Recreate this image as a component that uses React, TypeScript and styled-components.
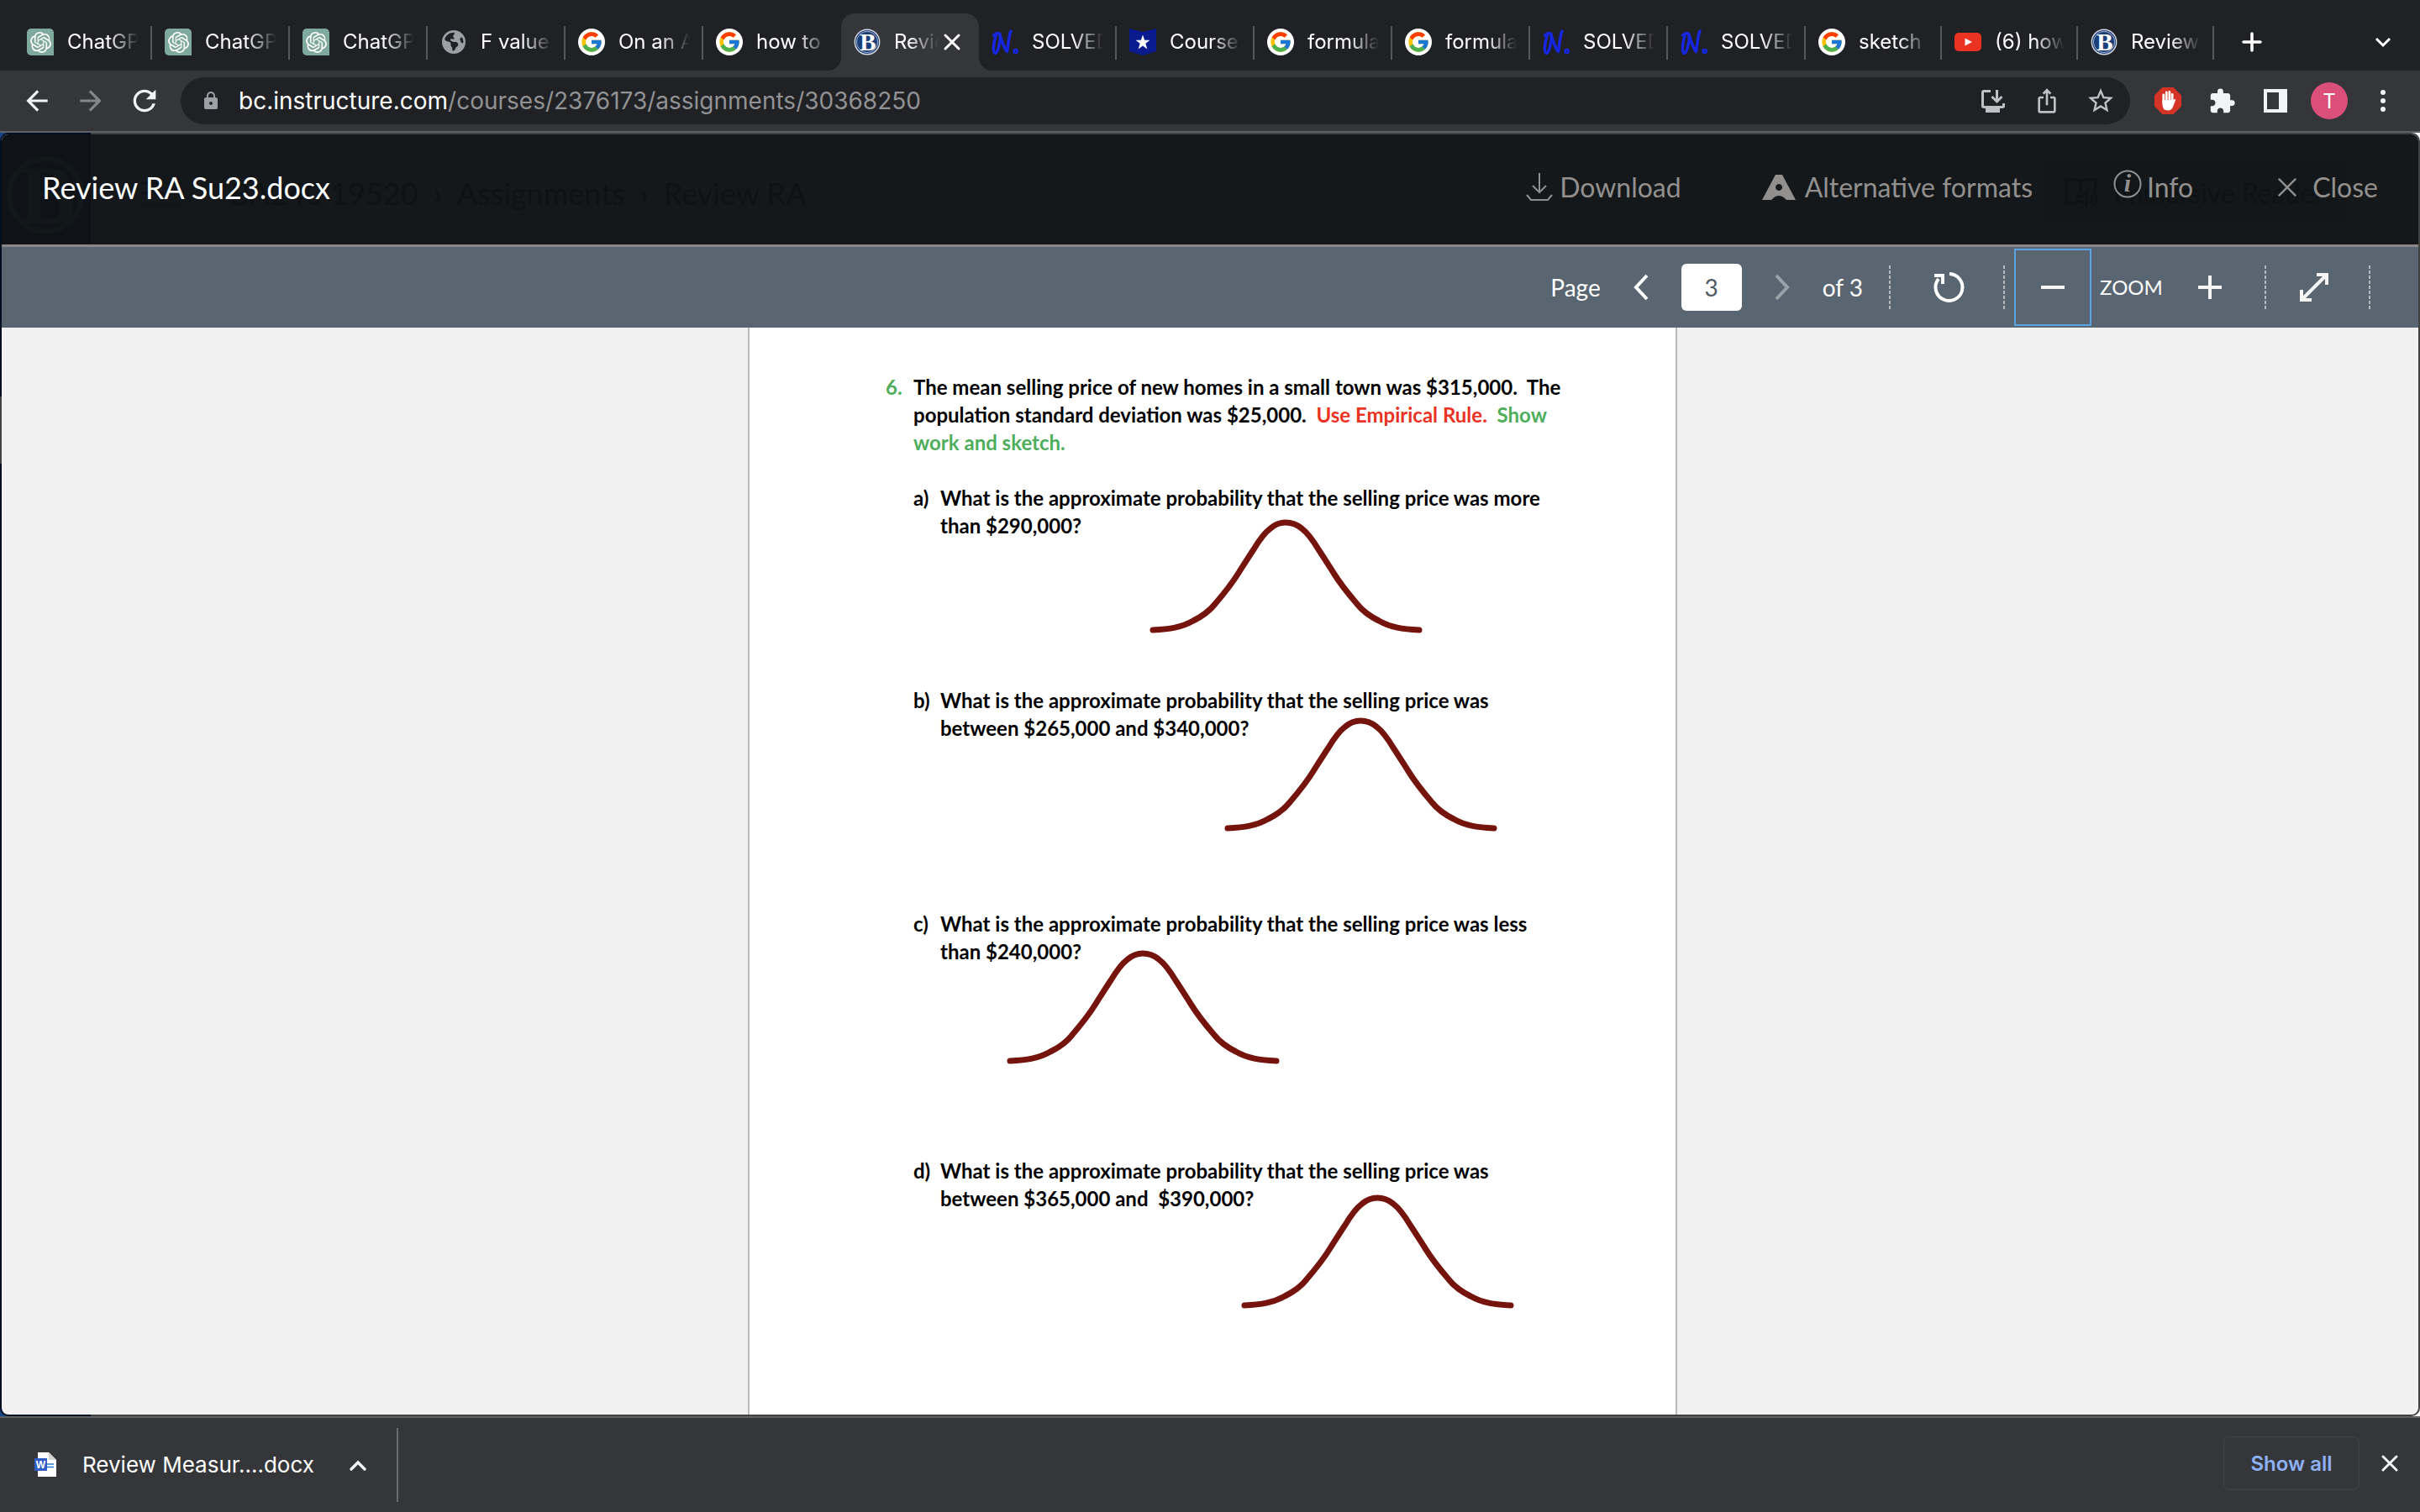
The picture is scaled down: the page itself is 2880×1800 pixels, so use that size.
import React from "react";
import styled, { createGlobalStyle, css } from "styled-components";
import {
  MdArrowBack,
  MdArrowForward,
  MdRefresh,
  MdLock,
  MdIosShare,
  MdStarBorder,
  MdExtension,
} from "react-icons/md";
import { FcGoogle } from "react-icons/fc";
import { SiOpenai } from "react-icons/si";
import { FaEarthAmericas } from "react-icons/fa6";

const ui = `Inter, "Liberation Sans", sans-serif`;
const lato = `Lato, "Open Sans", sans-serif`;

const GlobalStyle = createGlobalStyle`
  *, *::before, *::after { box-sizing: border-box; }
  body { margin: 0; background: #35363a; }
  button, input { font: inherit; color: inherit; border: 0; padding: 0; margin: 0; background: none; }
  button { cursor: pointer; }
  svg { display: block; flex: none; overflow: visible; }
`;

const Browser = styled.div`
  min-height: 100vh;
  display: flex;
  flex-direction: column;
  font-family: ${ui};
  color: #fff;
`;

/* ---------- tab strip ---------- */

const TabStrip = styled.div`
  display: flex;
  align-items: flex-end;
  height: 84px;
  padding: 0 28px 0 17px;
  background: #202124;
`;

const Tab = styled.div<{ $active?: boolean; $narrow?: boolean; $line?: boolean }>`
  position: relative;
  flex: 0 0 ${(p) => (p.$narrow ? 162 : 164)}px;
  min-width: 0;
  height: 68px;
  display: flex;
  align-items: center;
  padding: 0 16px 0 15px;
  ${(p) =>
    p.$line &&
    css`
      &::after {
        content: "";
        position: absolute;
        right: 0;
        top: 15px;
        width: 2px;
        height: 40px;
        background: #56575a;
      }
    `}
  ${(p) =>
    p.$active &&
    css`
      background: #35363a;
      border-radius: 16px 16px 0 0;
      &::before,
      &::after {
        content: "";
        position: absolute;
        bottom: 0;
        width: 16px;
        height: 16px;
      }
      &::before {
        right: 100%;
        background: radial-gradient(circle at 0 0, transparent 16px, #35363a 16px);
      }
      &::after {
        left: 100%;
        background: radial-gradient(circle at 100% 0, transparent 16px, #35363a 16px);
      }
    `}
`;

const TabButton = styled.button`
  flex: 1;
  min-width: 0;
  display: flex;
  align-items: center;
  gap: 16px;
  height: 100%;
  text-align: left;
`;

const TabTitle = styled.span`
  flex: 1;
  min-width: 0;
  overflow: hidden;
  white-space: nowrap;
  font-size: 24px;
  line-height: 32px;
  mask-image: linear-gradient(to right, #000 calc(100% - 36px), transparent);
`;

const IconButton = styled.button<{ $size?: number; $color?: string }>`
  flex: none;
  display: grid;
  place-items: center;
  width: ${(p) => p.$size ?? 64}px;
  height: ${(p) => p.$size ?? 64}px;
  color: ${(p) => p.$color ?? "#f1f3f4"};
`;

const StripTools = styled.div`
  flex: 1;
  display: flex;
  align-items: center;
  justify-content: space-between;
  height: 68px;
  padding-left: 29px;
`;

const Favicon = styled.span<{ $bg?: string; $radius?: string }>`
  flex: none;
  display: grid;
  place-items: center;
  width: 32px;
  height: 32px;
  background: ${(p) => p.$bg ?? "transparent"};
  border-radius: ${(p) => p.$radius ?? "0"};
`;

/* ---------- address row ---------- */

const AddressRow = styled.div`
  display: flex;
  align-items: center;
  height: 74px;
  padding: 0 12px;
  border-bottom: 2px solid #5f6063;
  background: #35363a;
`;

const Omnibox = styled.label`
  flex: 1;
  display: flex;
  align-items: center;
  height: 56px;
  margin: 0 13px 0 11px;
  padding: 0 3px 0 24px;
  border-radius: 28px;
  background: #202124;
  font-size: 28px;
  line-height: 36px;
`;

const Host = styled.span`
  margin-left: 21px;
`;

const PathInput = styled.input`
  flex: 1;
  min-width: 0;
  color: #919295;
  outline: 0;
`;

const Avatar = styled.span`
  display: grid;
  place-items: center;
  width: 44px;
  height: 44px;
  border-radius: 50%;
  background: #db4f7b;
  font-size: 24px;
`;

/* ---------- viewer ---------- */

const Frame = styled.main`
  flex: 1;
  display: flex;
  background: linear-gradient(to right, #1c4586 50%, #fff 50%);
`;

const Edge = styled.div`
  flex: 1;
  display: flex;
  padding: 2px;
  border-radius: 10px;
  background:
    linear-gradient(#020d20 314px, #444 314px, #444 394px, #020d20 394px) left / 2px 100% no-repeat,
    linear-gradient(#020d20, #020d20) left / 108px 100% no-repeat,
    #404141;
`;

const Viewer = styled.div`
  flex: 1;
  display: flex;
  flex-direction: column;
  overflow: hidden;
  border-radius: 8px;
  background: #f1f1f1;
  font-family: ${lato};
`;

const FileHeader = styled.header`
  position: relative;
  display: flex;
  align-items: center;
  height: 134px;
  padding: 0 48px 6px;
  border-bottom: 3px solid #8b8889;
  background: linear-gradient(to right, #0f1317 106px, #14181b 106px);
`;

const Backdrop = styled.div`
  position: absolute;
  inset: 0;
  display: flex;
  align-items: center;
  justify-content: space-between;
  padding: 8px 86px 0 6px;
  color: #0f1215;
`;

const Crumbs = styled.div`
  display: flex;
  align-items: center;
  gap: 18px;
  font-size: 36px;
`;

const ReaderBox = styled.div`
  display: flex;
  align-items: center;
  gap: 18px;
  height: 76px;
  padding: 0 26px;
  border-radius: 8px;
  background: #131719;
  font-size: 32px;
`;

const FileName = styled.h1`
  position: relative;
  flex: 1;
  margin: 0;
  font-size: 36px;
  font-weight: 400;
  line-height: 44px;
`;

const Actions = styled.div`
  position: relative;
  display: flex;
  align-items: center;
`;

const Action = styled.button<{ $gap: number; $before?: number }>`
  display: flex;
  align-items: center;
  gap: ${(p) => p.$gap}px;
  margin-left: ${(p) => p.$before ?? 0}px;
  font-size: 32px;
  line-height: 40px;
  color: #92908f;
`;

const Toolbar = styled.div`
  display: flex;
  align-items: center;
  justify-content: flex-end;
  height: 96px;
  padding-right: 46px;
  background: #596570;
  font-size: 28px;
  line-height: 36px;
`;

const PageGroup = styled.label`
  display: flex;
  align-items: center;
  margin-right: 12px;
`;

const Turn = styled.button<{ $dim?: boolean }>`
  display: grid;
  place-items: center;
  width: 96px;
  height: 92px;
  color: ${(p) => (p.$dim ? "#9aa2a9" : "#fff")};
`;

const PageInput = styled.input`
  width: 72px;
  height: 56px;
  border-radius: 6px;
  background: #fff;
  color: #4f5b66;
  text-align: center;
`;

const Divider = styled.span`
  width: 2px;
  height: 52px;
  margin: 0 11px 0 19px;
  background: repeating-linear-gradient(#b4bac0 0 4px, transparent 4px 6px);
`;

const Tool = styled.button<{ $focus?: boolean; $before?: number }>`
  display: grid;
  place-items: center;
  width: 92px;
  height: 92px;
  margin-left: ${(p) => p.$before ?? 0}px;
  border: 2px solid ${(p) => (p.$focus ? "#5ba4e4" : "transparent")};
`;

const ZoomLabel = styled.span`
  width: 95px;
  text-align: center;
  font-size: 24px;
`;

/* ---------- document ---------- */

const Sheet = styled.article`
  flex: 1;
  width: 1106px;
  max-width: 100%;
  margin-left: 888px;
  padding: 54px 0 0 162px;
  border: 0 solid #b9babc;
  border-width: 0 2px;
  background: #fff;
  color: #000;
  font-size: 24px;
  font-weight: 700;
  line-height: 33px;
  white-space: nowrap;
`;

const Problem = styled.section`
  display: grid;
  grid-template-columns: 33px 1fr;
`;

const Prompt = styled.p`
  margin: 0 0 33px;
`;

const Tint = styled.span<{ $tone: "red" | "green" }>`
  color: ${(p) => (p.$tone === "red" ? "#ea3323" : "#4eae5b")};
`;

const Parts = styled.ol`
  grid-column: 2;
  margin: 0;
  padding: 0;
  list-style: none;
`;

const Part = styled.li<{ $height: number }>`
  position: relative;
  display: grid;
  grid-template-columns: 32px 1fr;
  align-content: start;
  min-height: ${(p) => p.$height}px;
`;

const Curve = styled.svg<{ $x: number; $y: number }>`
  position: absolute;
  left: ${(p) => p.$x}px;
  top: ${(p) => p.$y}px;
`;

/* ---------- downloads ---------- */

const Shelf = styled.footer`
  display: flex;
  align-items: center;
  height: 114px;
  padding: 0 4px 0 40px;
  border-top: 2px solid #5f6063;
  background: #35363a;
`;

const Download = styled.div`
  display: flex;
  align-items: center;
  height: 88px;
  padding-right: 14px;
  border-right: 2px solid #6b6c6f;
`;

const FileButton = styled.button`
  display: flex;
  align-items: center;
  gap: 30px;
  padding-right: 20px;
  font-size: 26px;
  line-height: 32px;
`;

const ShelfEnd = styled.div`
  flex: 1;
  display: flex;
  align-items: center;
  justify-content: flex-end;
  gap: 4px;
  padding-bottom: 4px;
`;

const ShowAll = styled.button`
  width: 162px;
  height: 64px;
  border: 1px solid #424347;
  border-radius: 8px;
  color: #8fb1f5;
  font-size: 24px;
  font-weight: 600;
`;

/* ---------- drawings ---------- */

const Cross = ({ size, width = 3 }: { size: number; width?: number }) => (
  <svg width={size} height={size} viewBox="0 0 20 20" stroke="currentColor" strokeWidth={width} strokeLinecap="round">
    <path d="M2 2 18 18M18 2 2 18" />
  </svg>
);

const Seal = () => (
  <svg width="32" height="32" viewBox="0 0 32 32">
    <circle cx="16" cy="16" r="15.4" fill="#d9dde3" />
    <circle cx="16" cy="16" r="14" fill="#1b3f78" />
    <circle cx="16" cy="16" r="12.6" fill="none" stroke="#9fb0c8" strokeWidth="1" />
    <text x="17" y="25.5" textAnchor="middle" fontFamily="Liberation Serif, serif" fontWeight="700" fontSize="29" fill="#fff">
      B
    </text>
  </svg>
);

const Numerade = () => (
  <svg width="32" height="32" viewBox="0 0 32 32" fill="none" stroke="#1726e0" strokeLinecap="round" strokeLinejoin="round">
    <path d="M2.500 8C5 6 8 4.500 9.500 6.500C12 10 8 29 4.500 29.500C1 29 2.500 16 5 9" strokeWidth="3.500" />
    <path d="M9.500 6C12 14 15 24 18.500 27.500C20 20 20 10 23 3" strokeWidth="3.500" />
    <circle cx="28.600" cy="27" r="1.300" strokeWidth="4" />
  </svg>
);

const Shield = () => (
  <svg width="32" height="32" viewBox="0 0 32 32">
    <path d="M0 0 16 4 32 0V27L16 32 0 27Z" fill="#0a1a8f" />
    <path d="m16 7.500 2.200 6.300h6.300l-5.100 4 1.900 6.700-5.300-4-5.300 4 1.900-6.700-5.100-4h6.300Z" fill="#fff" />
  </svg>
);

const YouTube = () => (
  <svg width="32" height="32" viewBox="0 0 32 32">
    <rect y="5" width="32" height="22" rx="5" fill="#ea3323" />
    <path d="M12.500 11.500 21 16l-8.500 4.500Z" fill="#fff" />
  </svg>
);

const icons: Record<string, React.ReactNode> = {
  gpt: (
    <Favicon $bg="#7fa99c" $radius="5px 5px 0 5px">
      <SiOpenai size={25} color="#fff" />
    </Favicon>
  ),
  globe: (
    <Favicon>
      <FaEarthAmericas size={28} color="#9aa0a6" />
    </Favicon>
  ),
  google: (
    <Favicon $bg="#fff" $radius="50%">
      <FcGoogle size={28} />
    </Favicon>
  ),
  seal: <Seal />,
  numerade: <Numerade />,
  shield: <Shield />,
  youtube: <YouTube />,
};

type TabData = { icon: string; title: string; active?: boolean; narrow?: boolean };

const tabs: TabData[] = [
  { icon: "gpt", title: "ChatGPT" },
  { icon: "gpt", title: "ChatGPT" },
  { icon: "gpt", title: "ChatGPT" },
  { icon: "globe", title: "F value" },
  { icon: "google", title: "On an A" },
  { icon: "google", title: "how to c" },
  { icon: "seal", title: "Review", active: true },
  { icon: "numerade", title: "SOLVED" },
  { icon: "shield", title: "Course" },
  { icon: "google", title: "formula" },
  { icon: "google", title: "formula" },
  { icon: "numerade", title: "SOLVED" },
  { icon: "numerade", title: "SOLVED" },
  { icon: "google", title: "sketch t", narrow: true },
  { icon: "youtube", title: "(6) how", narrow: true },
  { icon: "seal", title: "Review", narrow: true },
];

const parts = [
  { mark: "a)", lines: ["What is the approximate probability that the selling price was more", "than $290,000?"], height: 241, x: 281, y: 42 },
  { mark: "b)", lines: ["What is the approximate probability that the selling price was", "between $265,000 and $340,000?"], height: 266, x: 370, y: 37 },
  { mark: "c)", lines: ["What is the approximate probability that the selling price was less", "than $240,000?"], height: 294, x: 111, y: 48 },
  { mark: "d)", lines: ["What is the approximate probability that the selling price was", "between $365,000 and \u00a0$390,000?"], height: 200, x: 390, y: 45 },
];

export default function App() {
  return (
    <Browser>
      <GlobalStyle />
      <TabStrip>
        {tabs.map((t, i) => (
          <Tab key={i} $active={t.active} $narrow={t.narrow} $line={!t.active && !tabs[i + 1]?.active}>
            <TabButton>
              {icons[t.icon]}
              <TabTitle>{t.title}</TabTitle>
            </TabButton>
            {t.active && (
              <IconButton $size={32} $color="#fff" aria-label="Close tab">
                <Cross size={20} />
              </IconButton>
            )}
          </Tab>
        ))}
        <StripTools>
          <IconButton $size={32} $color="#fff" aria-label="New tab">
            <svg width="24" height="24" viewBox="0 0 24 24" stroke="currentColor" strokeWidth="3.500" strokeLinecap="round">
              <path d="M12 2V22M2 12H22" />
            </svg>
          </IconButton>
          <IconButton $size={32} $color="#fff" aria-label="Search tabs">
            <svg width="20" height="12" viewBox="0 0 20 12" fill="none" stroke="currentColor" strokeWidth="3">
              <path d="m2 2 8 8 8-8" />
            </svg>
          </IconButton>
        </StripTools>
      </TabStrip>

      <AddressRow>
        <IconButton aria-label="Back">
          <MdArrowBack size={38} />
        </IconButton>
        <IconButton $color="#85868a" aria-label="Forward">
          <MdArrowForward size={38} />
        </IconButton>
        <IconButton aria-label="Reload">
          <MdRefresh size={40} />
        </IconButton>
        <Omnibox>
          <MdLock size={24} color="#9aa0a6" />
          <Host>bc.instructure.com</Host>
          <PathInput defaultValue="/courses/2376173/assignments/30368250" aria-label="Address" />
          <IconButton $color="#bdc1c6" aria-label="Install">
            <svg width="28" height="28" viewBox="0 0 28 28" fill="none" stroke="currentColor" strokeWidth="3">
              <path d="M11 2.500H3Q1.500 2.500 1.500 4V20Q1.500 21.500 3 21.500H25Q26.500 21.500 26.500 20V17" />
              <path d="M18.500 1V14M12.500 9 18.500 15 24.500 9" />
              <path d="M5 25H22" strokeWidth="6" />
            </svg>
          </IconButton>
          <IconButton $color="#bdc1c6" aria-label="Share">
            <MdIosShare size={32} />
          </IconButton>
          <IconButton $color="#bdc1c6" aria-label="Bookmark">
            <MdStarBorder size={36} />
          </IconButton>
        </Omnibox>
        <IconButton aria-label="Ad blocker">
          <svg width="32" height="32" viewBox="0 0 32 32">
            <path d="M9.400 0h13.200L32 9.400v13.200L22.600 32H9.400L0 22.600V9.400Z" fill="#d33426" />
            <path d="M10.800 9V18M14.300 6V18M17.900 5.500V18M21.200 8.500V18" stroke="#fff" strokeWidth="2.800" strokeLinecap="round" />
            <path d="M9.400 15H22.600L23.600 14.200Q25 13.400 25.300 14.600L22.300 22.500Q20.500 27.500 16 27.500Q9.400 27.500 9.400 20Z" fill="#fff" />
          </svg>
        </IconButton>
        <IconButton aria-label="Extensions">
          <MdExtension size={33} />
        </IconButton>
        <IconButton aria-label="Side panel">
          <svg width="28" height="28" viewBox="0 0 28 28">
            <path d="M0 0H28V28H0ZM4 4V24H18V4Z" fill="currentColor" fillRule="evenodd" />
          </svg>
        </IconButton>
        <IconButton $color="#fff" aria-label="Profile">
          <Avatar>T</Avatar>
        </IconButton>
        <IconButton aria-label="Menu">
          <svg width="6" height="26" viewBox="0 0 6 26" fill="currentColor">
            <circle cx="3" cy="3" r="3" />
            <circle cx="3" cy="13" r="3" />
            <circle cx="3" cy="23" r="3" />
          </svg>
        </IconButton>
      </AddressRow>

      <Frame>
        <Edge>
          <Viewer>
            <FileHeader>
              <Backdrop aria-hidden="true">
                <Crumbs>
                  <svg width="92" height="96" viewBox="0 0 92 96">
                    <circle cx="46" cy="50" r="43" fill="none" stroke="#12171a" strokeWidth="7" />
                    <text x="48" y="84" textAnchor="middle" fontFamily="Liberation Serif, serif" fontWeight="700" fontSize="100" fill="#12171a">
                      B
                    </text>
                  </svg>
                  <svg width="138" height="40" viewBox="0 0 138 40">
                    <path d="M50 8H98M50 20H98M50 34H98" stroke="#101316" strokeWidth="3" />
                  </svg>
                  <span>BA240 19520</span>
                  <span>›</span>
                  <span>Assignments</span>
                  <span>›</span>
                  <span>Review RA</span>
                </Crumbs>
                <ReaderBox>
                  <svg width="40" height="36" viewBox="0 0 40 36" fill="none" stroke="#0f1215" strokeWidth="3">
                    <path d="M14 30H2V2H14Q19 2 19 8Q19 2 24 2H37V16M19 8V18M15 22v6h5l6 5V17l-6 5ZM31 20q4 5 0 10M35 17q6 8 0 16" />
                  </svg>
                  <span>Immersive Reader</span>
                </ReaderBox>
              </Backdrop>
              <FileName>Review RA Su23.docx</FileName>
              <Actions>
                <Action $gap={8}>
                  <svg width="32" height="34" viewBox="0 0 32 34" fill="none" stroke="currentColor" strokeWidth="2">
                    <path d="M16 0V23M8 15 16 23 24 15M1 26 6 32H26L31 26" />
                  </svg>
                  Download
                </Action>
                <Action $gap={11} $before={96}>
                  <svg width="40" height="30" viewBox="0 0 40 30">
                    <path d="M16 0H24L40 30H29Q20 20 11 30H0ZM20 11a4 4 0 1 0 .1 0Z" fill="currentColor" fillRule="evenodd" />
                  </svg>
                  Alternative formats
                </Action>
                <Action $gap={6} $before={96}>
                  <svg width="34" height="42" viewBox="0 0 34 42">
                    <circle cx="17" cy="17" r="15.500" fill="none" stroke="currentColor" strokeWidth="2" />
                    <text x="17" y="26" textAnchor="middle" fontFamily="Liberation Serif, serif" fontStyle="italic" fontWeight="700" fontSize="30" fill="currentColor">
                      i
                    </text>
                  </svg>
                  Info
                </Action>
                <Action $gap={18} $before={100}>
                  <Cross size={24} width={2} />
                  Close
                </Action>
              </Actions>
            </FileHeader>

            <Toolbar>
              <PageGroup>
                Page
                <Turn aria-label="Previous page">
                  <svg width="20" height="30" viewBox="0 0 20 30" fill="none" stroke="currentColor" strokeWidth="4">
                    <path d="M17 1 4 15 17 29" />
                  </svg>
                </Turn>
                <PageInput defaultValue="3" aria-label="Page number" />
                <Turn $dim aria-label="Next page">
                  <svg width="20" height="30" viewBox="0 0 20 30" fill="none" stroke="currentColor" strokeWidth="4">
                    <path d="M3 1 16 15 3 29" />
                  </svg>
                </Turn>
                of 3
              </PageGroup>
              <Divider />
              <Tool $before={12} aria-label="Rotate">
                <svg width="38" height="38" viewBox="0 0 38 38" fill="none" stroke="#fff" strokeWidth="4">
                  <path d="M20 3A16 16 0 1 1 7 9" />
                  <path d="M2 5H12V15" />
                </svg>
              </Tool>
              <Divider />
              <Tool $focus aria-label="Zoom out">
                <svg width="28" height="4" viewBox="0 0 28 4">
                  <rect width="28" height="4" fill="#f5f5f5" />
                </svg>
              </Tool>
              <ZoomLabel>ZOOM</ZoomLabel>
              <Tool aria-label="Zoom in">
                <svg width="28" height="28" viewBox="0 0 28 28" stroke="#f5f5f5" strokeWidth="4">
                  <path d="M14 0V28M0 14H28" />
                </svg>
              </Tool>
              <Divider />
              <Tool aria-label="Full screen">
                <svg width="34" height="34" viewBox="0 0 34 34" fill="none" stroke="#f5f5f5" strokeWidth="4">
                  <path d="M3 31 31 3M20 2H32V14M2 20V32H14" />
                </svg>
              </Tool>
              <Divider />
            </Toolbar>

            <Sheet>
              <Problem>
                <Tint $tone="green">6.</Tint>
                <Prompt>
                  The mean selling price of new homes in a small town was $315,000. &nbsp;The
                  <br />
                  population standard deviation was $25,000. &nbsp;<Tint $tone="red">Use Empirical Rule.</Tint>{" "}
                  <Tint $tone="green">
                    &nbsp;Show
                    <br />
                    work and sketch.
                  </Tint>
                </Prompt>
                <Parts>
                  {parts.map((p) => (
                    <Part key={p.mark} $height={p.height}>
                      <span>{p.mark}</span>
                      <span>
                        {p.lines[0]}
                        <br />
                        {p.lines[1]}
                      </span>
                      <Curve $x={p.x} $y={p.y} width="325" height="136" viewBox="0 0 325 136" fill="none" stroke="#75140c" strokeWidth="7" strokeLinecap="round">
                        <path d="M4 132C24 131 38 129 52 121C64 115 71 110 78 101C90 87 98 77 106 64C113 53 118 45 124 36C130 26 136 17 144 11C150 6 156 4 162 4C169 4 175 6 181 11C189 17 195 26 201 36C207 45 212 53 219 64C227 77 235 87 247 101C254 110 261 115 273 121C287 129 301 131 321 132" />
                      </Curve>
                    </Part>
                  ))}
                </Parts>
              </Problem>
            </Sheet>
          </Viewer>
        </Edge>
      </Frame>

      <Shelf>
        <Download>
          <FileButton>
            <svg width="28" height="30" viewBox="0 0 28 30">
              <path d="M5 0H18L27 9V29H5Z" fill="#fff" />
              <path d="M18 0V9H27Z" fill="#d4d4d4" />
              <path d="M16 14H24M16 17.500H24" stroke="#2f7cd0" strokeWidth="1.500" />
              <rect x="1" y="7" width="15" height="15" fill="#2f5fc4" />
              <text x="8.500" y="18.500" textAnchor="middle" fontFamily="Liberation Sans, sans-serif" fontWeight="700" fontSize="12" fill="#fff">
                W
              </text>
            </svg>
            Review Measur....docx
          </FileButton>
          <IconButton aria-label="Download options">
            <svg width="20" height="13" viewBox="0 0 20 13" fill="none" stroke="currentColor" strokeWidth="3.500" strokeLinecap="round">
              <path d="m2 11 8-8 8 8" />
            </svg>
          </IconButton>
        </Download>
        <ShelfEnd>
          <ShowAll>Show all</ShowAll>
          <IconButton aria-label="Close downloads">
            <Cross size={20} />
          </IconButton>
        </ShelfEnd>
      </Shelf>
    </Browser>
  );
}
